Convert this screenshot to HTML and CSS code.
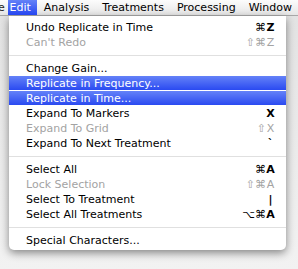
FILE: index.html
```html
<!DOCTYPE html>
<html lang="en">
<head>
  <meta charset="UTF-8">
  <title>Edit menu</title>
  <link rel="stylesheet" href="styles.css">
</head>
<body>

<div class="menubar">
  <span class="title cut">e</span>
  <span class="title active">Edit</span>
  <span class="title">Analysis</span>
  <span class="title">Treatments</span>
  <span class="title">Processing</span>
  <span class="title">Window</span>
</div>

<div class="menu">
  <div class="item"><span>Undo Replicate in Time</span><span class="keys">⌘<span class="key">Z</span></span></div>
  <div class="item off"><span>Can't Redo</span><span class="keys">⇧⌘<span class="key">Z</span></span></div>
  <div class="sep"></div>
  <div class="item"><span>Change Gain...</span></div>
  <div class="item on"><span>Replicate in Frequency...</span></div>
  <div class="item on"><span>Replicate in Time...</span></div>
  <div class="item"><span>Expand To Markers</span><span class="keys"><span class="key">X</span></span></div>
  <div class="item off"><span>Expand To Grid</span><span class="keys">⇧<span class="key">X</span></span></div>
  <div class="item"><span>Expand To Next Treatment</span><span class="keys"><span class="key">`</span></span></div>
  <div class="sep"></div>
  <div class="item"><span>Select All</span><span class="keys">⌘<span class="key">A</span></span></div>
  <div class="item off"><span>Lock Selection</span><span class="keys">⇧⌘<span class="key">A</span></span></div>
  <div class="item"><span>Select To Treatment</span><span class="keys"><span class="key">|</span></span></div>
  <div class="item"><span>Select All Treatments</span><span class="keys">⌥⌘<span class="key">A</span></span></div>
  <div class="sep"></div>
  <div class="item"><span>Special Characters...</span></div>
</div>

</body>
</html>
```

FILE: styles.css
```css
body {
  margin: 0;
  width: 298px;
  height: 269px;
  overflow: hidden;
  background: linear-gradient(to bottom, #e2e2e2, #f2f2f2);
  font-family: 'DejaVu Sans', sans-serif;
  font-size: 11px;
  color: #000;
}
.menubar {
  display: flex;
  height: 15px;
  line-height: 15px;
  background: linear-gradient(to bottom, #fcfcfc, #e6e6e6);
  border-bottom: 1px solid #a8a8a8;
  white-space: nowrap;
  overflow: hidden;
}
.title {
  padding: 0 6px 0 7px;
}
.cut {
  width: 15px;
  padding: 0;
  text-indent: -2px;
  overflow: hidden;
  color: #222;
}
.active {
  padding: 0 6px 0 2px;
  color: #fff;
  background: linear-gradient(to bottom, #6482f8, #2646f0);
}
.menu {
  margin-left: 9px;
  width: 277px;
  padding: 4px 0 2px;
  background: #fff;
  border-radius: 0 0 5px 5px;
  box-shadow: 0 3px 9px rgba(0,0,0,0.45);
}
.item {
  display: flex;
  justify-content: space-between;
  height: 15px;
  line-height: 15px;
  padding: 0 11px 0 17px;
  white-space: nowrap;
}
.off {
  color: #a3a3a3;
}
.on {
  color: #fff;
  background: linear-gradient(to bottom, #6482f8, #2646f0);
  box-shadow: inset 0 -1px 0 #fff;
}
.keys {
  display: flex;
}
.key {
  width: 9px;
  text-align: center;
  font-weight: bold;
}
.off .key {
  font-weight: normal;
}
.sep {
  height: 11px;
  background: linear-gradient(to bottom, transparent 5px, #e0e0e0 5px, #e0e0e0 6px, transparent 6px);
}
```
